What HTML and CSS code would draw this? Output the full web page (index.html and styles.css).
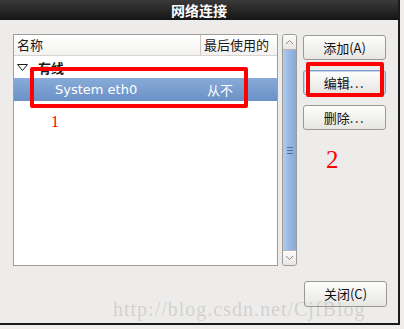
FILE: index.html
```html
<!DOCTYPE html>
<html lang="zh">
<head>
<meta charset="utf-8">
<link rel="stylesheet" href="styles.css">
</head>
<body>
<div class="window">
  <div class="titlebar">网络连接</div>
  <div class="content">
    <div class="main">
      <div class="list">
        <div class="header">
          <div class="hcol hname">名称</div>
          <div class="hcol hlast">最后使用的</div>
        </div>
        <div class="row group">
          <svg class="expander" width="11" height="7" viewBox="0 0 11 7"><polygon points="0.5,0.5 10.5,0.5 5.5,6.5" fill="none" stroke="#1e1e1e" stroke-width="1"/></svg>
          <span class="group-label">有线</span>
        </div>
        <div class="row selected">
          <span class="cname">System eth0</span>
          <span class="clast">从不</span>
        </div>
      </div>
      <div class="scrollbar">
        <div class="arrow up"><svg width="9" height="6" viewBox="0 0 9 6"><polyline points="1,5 4.5,1.5 8,5" fill="none" stroke="#8a8a8a" stroke-width="1"/></svg></div>
        <div class="thumb"><svg class="grip" width="6" height="7" viewBox="0 0 6 7"><path d="M0 0.5H6M0 3.5H6M0 6.5H6" stroke="#4f6e9c" stroke-width="1"/></svg></div>
        <div class="arrow down"><svg width="9" height="6" viewBox="0 0 9 6"><polyline points="1,1 4.5,4.5 8,1" fill="none" stroke="#8a8a8a" stroke-width="1"/></svg></div>
      </div>
      <div class="buttons">
        <button class="btn">添加(A)</button>
        <button class="btn focused">编辑<span class="dots">...</span></button>
        <button class="btn">删除<span class="dots">...</span></button>
      </div>
    </div>
    <div class="footer">
      <button class="btn close">关闭(C)</button>
    </div>
  </div>
  <div class="mark mark1"></div>
  <div class="mark mark2"></div>
  <div class="num num1">1</div>
  <div class="num num2">2</div>
  <div class="watermark">http://blog.csdn.net/CjfBlog</div>
</div>
</body>
</html>
```

FILE: styles.css
```css
* { box-sizing: border-box; }
html, body { margin: 0; padding: 0; }
body {
  width: 404px;
  height: 329px;
  background: #efeeec;
  font-family: "Noto Sans CJK SC", "DejaVu Sans", sans-serif;
  overflow: hidden;
}
.window {
  position: relative;
  width: 400px;
  height: 325px;
  background: #edecea;
  border-right: 2px solid #1b1b1b;
  border-bottom: 2px solid #1b1b1b;
}
.titlebar {
  height: 20px;
  background: linear-gradient(#3a3a3a, #151515);
  color: #ffffff;
  font-weight: bold;
  font-size: 14px;
  line-height: 20px;
  text-align: center;
}
.content {
  padding: 14px 0 0 13px;
}
.main {
  display: flex;
  align-items: flex-start;
}
.list {
  width: 265px;
  height: 232px;
  background: #ffffff;
  border: 1px solid #a09e9b;
}
.header {
  display: flex;
  height: 21px;
  border-bottom: 1px solid #d6d4d0;
  background: linear-gradient(#ffffff, #f3f2f0);
  font-size: 13px;
  line-height: 20px;
  color: #1a1a1a;
}
.hcol { padding-left: 3px; }
.hname { width: 187px; border-right: 1px solid #c9c7c3; }
.hlast { flex: 1; }
.row {
  display: flex;
  align-items: center;
  font-size: 13px;
}
.group {
  height: 22px;
  padding-left: 3px;
}
.expander { margin-right: 10px; margin-top: 1px; }
.group-label { font-weight: bold; color: #1a1a1a; }
.selected {
  height: 23px;
  background: linear-gradient(#88abd8, #6a90c6);
  color: #ffffff;
}
.cname {
  width: 188px;
  padding-left: 41px;
  font-family: "DejaVu Sans", sans-serif;
  font-size: 13px;
}
.clast { padding-left: 5px; }
.scrollbar {
  margin-left: 4px;
  width: 15px;
  height: 232px;
  border: 1px solid #9d9b98;
  border-radius: 3px;
  display: flex;
  flex-direction: column;
  background: #dcdad6;
  overflow: hidden;
}
.arrow {
  height: 15px;
  background: linear-gradient(#fbfbfa, #e8e7e5);
  display: flex;
  align-items: center;
  justify-content: center;
}
.arrow.up { border-bottom: 1px solid #b9b7b3; }
.arrow.down { border-top: 1px solid #b9b7b3; }
.thumb {
  flex: 1;
  background: linear-gradient(90deg, #b3cbec, #9bbbe4 40%, #86a9db);
  display: flex;
  align-items: center;
  justify-content: center;
}
.buttons {
  margin-left: 6px;
  display: flex;
  flex-direction: column;
  gap: 10px;
  padding-top: 1px;
}
.btn {
  width: 83px;
  height: 25px;
  padding: 0;
  border: 1px solid #9b9996;
  border-radius: 3px;
  background: linear-gradient(#fdfdfc, #e7e6e3);
  font-family: "Noto Sans CJK SC", "DejaVu Sans", sans-serif;
  font-size: 13px;
  color: #111111;
  line-height: 22px;
}
.dots { letter-spacing: 1.6px; }
.btn.focused {
  border-color: #7f9dc8;
  box-shadow: inset 0 0 0 1px #c3d4ec;
}
.footer {
  display: flex;
  justify-content: flex-end;
  padding: 15px 11px 0 0;
}
.btn.close { height: 26px; }
.mark {
  position: absolute;
  border: 4px solid #ff0000;
  border-radius: 2px;
}
.mark1 { left: 30px; top: 67px; width: 218px; height: 41px; }
.mark2 { left: 306px; top: 62px; width: 78px; height: 35px; }
.num {
  position: absolute;
  color: #ff0000;
  font-family: "Liberation Serif", serif;
  line-height: 1;
}
.num1 { left: 51px; top: 114px; font-size: 16px; }
.num2 { left: 326px; top: 147px; font-size: 25px; }
.watermark {
  position: absolute;
  left: 113px;
  top: 298px;
  font-family: "Liberation Serif", serif;
  font-size: 20px;
  line-height: 22px;
  letter-spacing: 1px;
  color: rgba(140, 138, 134, 0.28);
  white-space: nowrap;
}
```
